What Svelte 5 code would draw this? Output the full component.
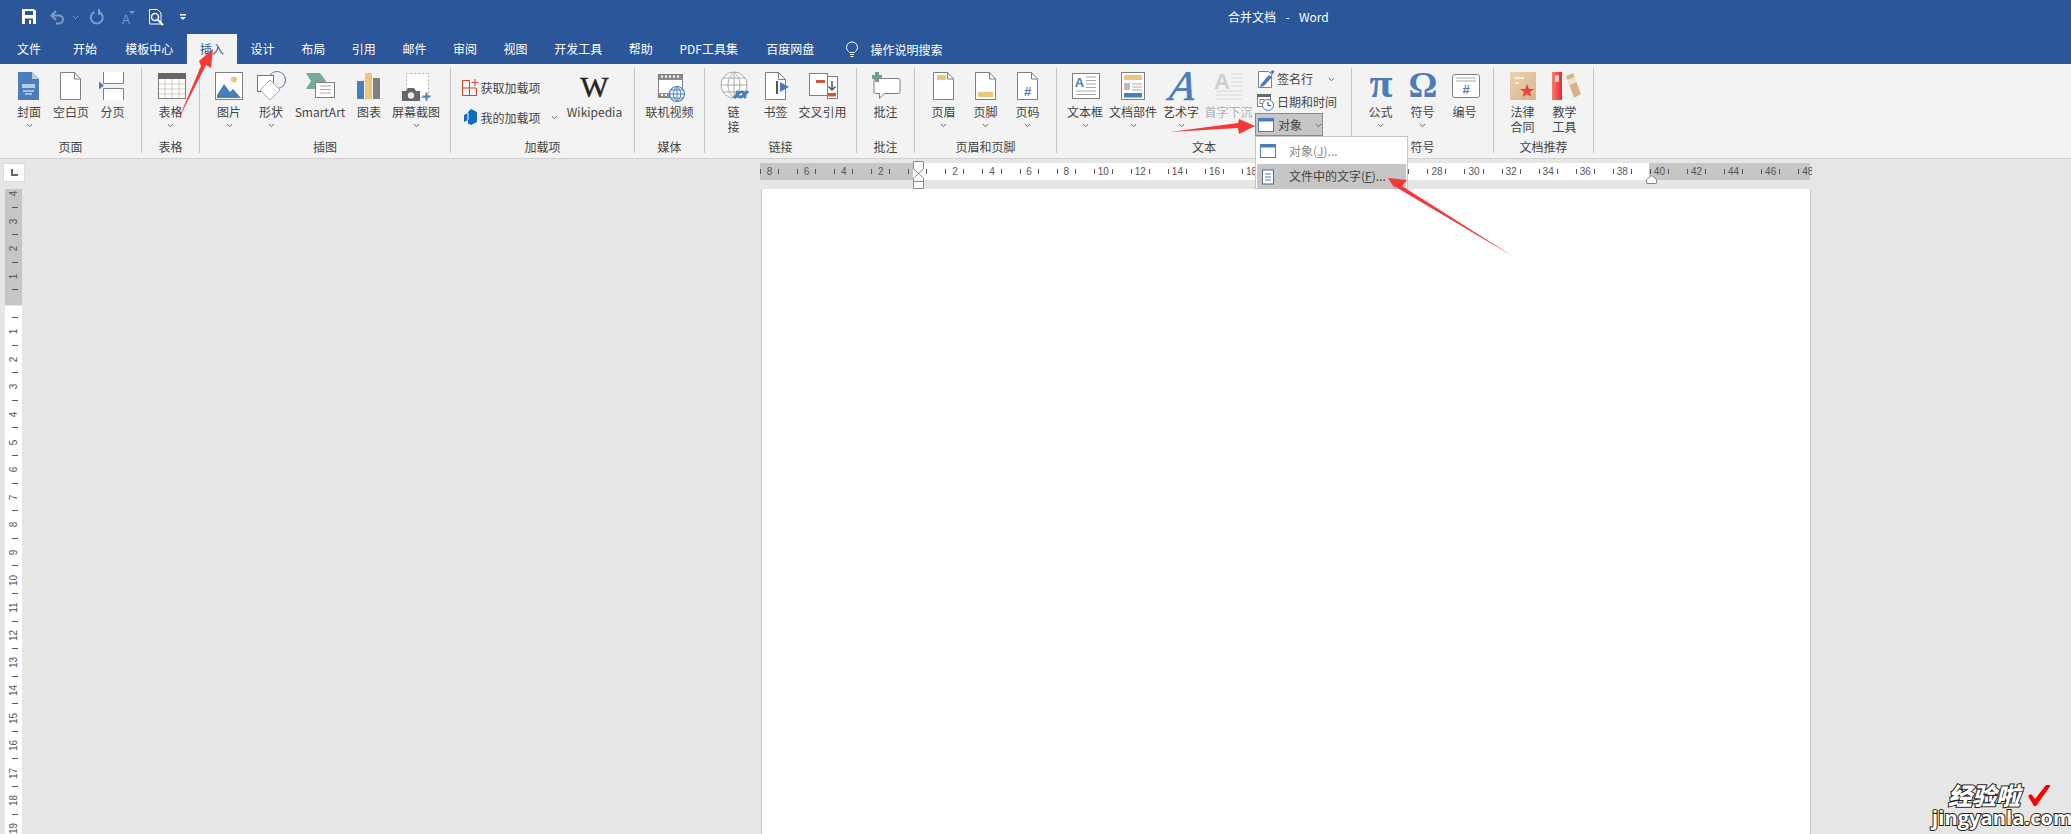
<script>
  const B = '#4a7ebb'
  const T = '#edc67e'
  const G = '#7f7f7f'
  const L = '#a9a9a9'

  const pageShape = `<path d="M5.5 2.5h14l6 6.5v20.5h-20z" fill="#fff" stroke="${G}"/><path d="M19.5 2.5V9h6" fill="none" stroke="${G}"/>`

  // each value is the inside of a 32x32 svg, small ones use 20x20
  const icons = {
    cover: `<path d="M5 2h14l7 7v21H5z" fill="${B}"/><path d="M19 2l7 7h-7z" fill="#b5cde6"/><path d="M9 14h13v4H9z" fill="#cfe0f2" opacity=".8"/><path d="M10 21h11M12 24h7" stroke="#fff" fill="none"/>`,
    blank: pageShape,
    pagebreak: `<path d="M6.5 2V13.5H26.5V2" fill="#fff" stroke="${G}"/><path d="M6.5 30V18.5H26.5V30" fill="#fff" stroke="${G}"/><path d="M2 11.500v8l5-4z" fill="${B}"/>`,
    table: `<rect x="3.500" y="3.500" width="27" height="25" fill="#fff" stroke="${G}"/><path d="M10 9v19M17 9v19M24 9v19M4 14h26M4 19h26M4 24h26" stroke="#cfc9b8" fill="none"/><rect x="3" y="3" width="28" height="6" fill="#666"/>`,
    picture: `<rect x="2.500" y="2.500" width="27" height="27" fill="#fff" stroke="${G}"/><circle cx="21" cy="9.500" r="3" fill="${T}"/><path d="M4 28v-3l7-11 6 8 3-3 8 9z" fill="${B}"/>`,
    shapes: `<circle cx="22" cy="10" r="8.500" fill="none" stroke="${B}"/><rect x="2.500" y="5.500" width="16" height="16" fill="#fff" stroke="${B}"/><path d="M15 10l10 10-10 10-10-10z" fill="#fff" stroke="${L}"/>`,
    smartart: `<path d="M2 3h14l6 8-6 8H2l5-8z" fill="#7aa899"/><rect x="11.500" y="12.500" width="19" height="15" fill="#fff" stroke="${G}"/><path d="M16 16h11M16 19.500h11M16 23h11" stroke="${L}" fill="none"/>`,
    chart: `<rect x="4" y="11" width="7" height="18" fill="${B}"/><rect x="12" y="3" width="7" height="26" fill="${T}"/><rect x="20" y="8" width="7" height="21" fill="${G}"/>`,
    screenshot: `<rect x="6.500" y="3.500" width="22" height="24" fill="#fff" stroke="#aaa" stroke-dasharray="2 2"/><path d="M2 21h4l2-3h6l2 3h4v10H2z" fill="#666"/><circle cx="11" cy="25.500" r="3.200" fill="#eee"/><path d="M26.500 22.500v8M22.500 26.500h8" stroke="${B}" stroke-width="2" fill="none"/>`,
    video: `<rect x="4.500" y="4.500" width="24" height="23" fill="#fff" stroke="${G}"/><path d="M5 5h23v5H5zM5 23h23v4H5z" fill="#8c8c8c"/><path d="M7 6.500h2M11 6.500h2M15 6.500h2M19 6.500h2M23 6.500h2M7 25h2M11 25h2" stroke="#fff" fill="none" stroke-width="2"/><circle cx="23" cy="24" r="7.500" fill="#fff" stroke="${B}" stroke-width="1.200"/><path d="M15.500 24h15M23 16.500v15M17 20h12M17 28h12M23 16.500c-5 4-5 11 0 15M23 16.500c5 4 5 11 0 15" stroke="${B}" fill="none"/>`,
    hyperlink: `<circle cx="16" cy="15" r="13" fill="#fff" stroke="${L}"/><path d="M3 15h26M16 2v26M5 8h22M5 22h22M16 2c-8 7-8 19 0 26M16 2c8 7 8 19 0 26" stroke="${L}" fill="none"/><path d="M16 28l5-5a3.500 3.500 0 0 1 5 5M30 21l-5 5a3.500 3.500 0 0 1-5-5" fill="none" stroke="${B}" stroke-width="3"/>`,
    bookmark: `<path d="M5.500 2.500h13l7 7v20h-20z" fill="#fff" stroke="${G}"/><path d="M18.500 2.500v7h7" fill="none" stroke="${G}"/><path d="M17 11v13" stroke="#555" stroke-width="2"/><path d="M20 12v10l9-5z" fill="${B}"/>`,
    crossref: `<rect x="2.500" y="3.500" width="18" height="22" fill="#fff" stroke="${G}"/><rect x="20.500" y="6.500" width="10" height="22" fill="#fff" stroke="${G}"/><rect x="9" y="10" width="9" height="3" fill="#d0563c"/><rect x="21" y="23" width="8" height="3.500" fill="#d0563c"/><path d="M25 11v9M21.500 16.500l3.500 3.500 3.500-3.500" stroke="#555" stroke-width="1.500" fill="none"/>`,
    comment: `<path d="M6 8.500h22a2 2 0 0 1 2 2v11a2 2 0 0 1-2 2H14l-4.500 5v-5H6a2 2 0 0 1-2-2v-11a2 2 0 0 1 2-2z" fill="#fff" stroke="${G}"/><path d="M7 2v10M2 7h10" stroke="#6fa08c" stroke-width="4" fill="none"/>`,
    header: `${pageShape}<rect x="9" y="5" width="9" height="5" fill="${T}"/>`,
    footer: `${pageShape}<rect x="8" y="22" width="15" height="5" fill="${T}"/>`,
    pagenum: `${pageShape}<text x="15.500" y="26" text-anchor="middle" font-family="Liberation Sans" font-size="13" font-weight="700" fill="${B}">#</text>`,
    textbox: `<rect x="3.500" y="3.500" width="27" height="25" fill="#fff" stroke="${G}"/><text x="10.500" y="17" text-anchor="middle" font-family="Liberation Sans" font-size="13" font-weight="700" fill="${B}">A</text><path d="M17 7h10M17 10.500h10M17 14h10M17 17.500h10M7 21h20M7 24.500h20" stroke="${L}" fill="none"/>`,
    parts: `<rect x="4.500" y="2.500" width="23" height="27" fill="#fff" stroke="${G}"/><rect x="7" y="5" width="18" height="5" fill="${T}"/><rect x="7" y="13" width="6" height="7" fill="#bbb"/><path d="M15 14h10M15 17h10M15 20h10" stroke="${L}" fill="none"/><rect x="7" y="23" width="18" height="4.500" fill="${B}"/>`,
    wordart: `<text x="20" y="30" text-anchor="middle" transform="skewX(-8)" font-family="Liberation Serif" font-style="italic" font-size="42" fill="${B}" stroke="${B}" stroke-width=".6">A</text>`,
    dropcap: `<text x="9" y="19" text-anchor="middle" font-family="Liberation Sans" font-weight="700" font-size="22" fill="#cfcfcf">A</text><path d="M18 4h11M18 8h11M18 12h11M18 16h11M3 21h26M3 25h26M3 29h26" stroke="#d8d8d8" fill="none"/>`,
    formula: `<text x="16" y="27" text-anchor="middle" font-family="Liberation Serif" font-weight="700" font-size="42" fill="${B}">π</text>`,
    omega: `<text x="16" y="27" text-anchor="middle" font-family="Liberation Serif" font-weight="700" font-size="36" fill="${B}">Ω</text>`,
    number: `<rect x="3.500" y="4.500" width="27" height="23" rx="2" fill="#fff" stroke="${G}"/><path d="M7 8h20M7 11h20" stroke="${L}" fill="none"/><text x="17" y="24" text-anchor="middle" font-family="Liberation Sans" font-size="13" font-weight="700" fill="${B}">#</text>`,
    law: `<defs><linearGradient id="lawg" x1="0" y1="0" x2="1" y2="1"><stop offset="0" stop-color="#e9d2b4"/><stop offset="1" stop-color="#d9b48a"/></linearGradient></defs><rect x="3" y="2" width="26" height="28" fill="url(#lawg)"/><path d="M8 8h9M8 13h4" stroke="#fff" stroke-width="1.500" fill="none"/><path d="M20 14l2 5h5l-4 3 1.500 5-4.500-3-4.500 3 1.500-5-4-3h5z" fill="#ee4040"/>`,
    teach: `<defs><linearGradient id="bookg" x1="0" y1="0" x2="1" y2="0"><stop offset="0" stop-color="#ff7a70"/><stop offset="1" stop-color="#e8262c"/></linearGradient></defs><path d="M17 6l7-3 8 21-7 4z" fill="#d9b48a"/><path d="M18.500 10l7-3 2 5-7 3z" fill="#f0e3d0"/><rect x="3" y="2" width="10" height="28" fill="url(#bookg)"/><rect x="6" y="5" width="4" height="7" rx="1" fill="#ffd9d4"/>`,
    addin: `<path d="M8.500 3.500H1.500V18.500H15.500V11H1.500M8.500 3.500V18.500" fill="none" stroke="#d24726"/><path d="M14 2v7M10.500 5.500h7" fill="none" stroke="#d24726"/>`,
    myaddin: `<path d="M10 2l6 3v10l-6 3-3-1.500V13L3 15V8l4-2v-1z" fill="#106ebe"/><path d="M7 6v7" stroke="#fff"/>`,
    sign: `<path d="M3.500 2.500h10l3 3v13h-13z" fill="#fff" stroke="${G}"/><path d="M6 15l8-9 3 2-8 9-4 1z" fill="${B}"/><path d="M15 3l3-2 1.500 1.500-2 3z" fill="${B}"/>`,
    date: `<rect x="2.500" y="2.500" width="13" height="12" fill="#fff" stroke="${G}"/><rect x="2" y="2" width="14" height="3" fill="#666"/><rect x="5" y="7.500" width="4" height="4" fill="none" stroke="#d2701e"/><circle cx="13" cy="13" r="5.500" fill="#fff" stroke="${B}"/><path d="M13 10v3.500h3" stroke="#444" fill="none"/>`,
    object: `<rect x="2.500" y="3.500" width="15" height="13" fill="#fff" stroke="${B}"/><rect x="2" y="3" width="16" height="3.500" fill="${B}"/>`,
    textfile: `<rect x="4.500" y="3" width="11" height="14" fill="#fff" stroke="#5a6a80"/><path d="M7 7h6M7 10h6M7 13h6" stroke="${B}" fill="none"/>`
  }

  const groups = [
    { label: '页面', width: 142, items: [
      { icon: 'cover', text: '封面', w: 42, chev: true },
      { icon: 'blank', text: '空白页', w: 42 },
      { icon: 'pagebreak', text: '分页', w: 41 }
    ] },
    { label: '表格', width: 58, items: [{ icon: 'table', text: '表格', w: 50, chev: true }] },
    { label: '插图', width: 251, items: [
      { icon: 'picture', text: '图片', w: 42, chev: true },
      { icon: 'shapes', text: '形状', w: 42, chev: true },
      { icon: 'smartart', text: 'SmartArt', w: 56 },
      { icon: 'chart', text: '图表', w: 42 },
      { icon: 'screenshot', text: '屏幕截图', w: 52, chev: true }
    ] },
    { label: '加载项', width: 184, items: [
      { kind: 'addins' },
      { kind: 'wiki', text: 'Wikipedia', w: 60 }
    ] },
    { label: '媒体', width: 70, items: [{ icon: 'video', text: '联机视频', w: 60 }] },
    { label: '链接', width: 152, items: [
      { icon: 'hyperlink', text: '链\n接', w: 42 },
      { icon: 'bookmark', text: '书签', w: 42 },
      { icon: 'crossref', text: '交叉引用', w: 52 }
    ] },
    { label: '批注', width: 58, items: [{ icon: 'comment', text: '批注', w: 42 }] },
    { label: '页眉和页脚', width: 142, items: [
      { icon: 'header', text: '页眉', w: 42, chev: true },
      { icon: 'footer', text: '页脚', w: 42, chev: true },
      { icon: 'pagenum', text: '页码', w: 42, chev: true }
    ] },
    { label: '文本', width: 295, items: [
      { icon: 'textbox', text: '文本框', w: 48, chev: true },
      { icon: 'parts', text: '文档部件', w: 48, chev: true },
      { icon: 'wordart', text: '艺术字', w: 48, chev: true },
      { icon: 'dropcap', text: '首字下沉', w: 47, muted: true },
      { kind: 'textcol' }
    ] },
    { label: '符号', width: 142, items: [
      { icon: 'formula', text: '公式', w: 42, chev: true },
      { icon: 'omega', text: '符号', w: 42, chev: true },
      { icon: 'number', text: '编号', w: 42 }
    ] },
    { label: '文档推荐', width: 100, items: [
      { icon: 'law', text: '法律\n合同', w: 42 },
      { icon: 'teach', text: '教学\n工具', w: 42 }
    ] }
  ]

  const tabs = ['文件', '开始', '模板中心', '插入', '设计', '布局', '引用', '邮件', '审阅', '视图', '开发工具', '帮助', 'PDF工具集', '百度网盘']

  // ruler numbers, 0 is left blank under the indent marker
  const hNums = Array.from({ length: 29 }, (_, i) => Math.abs(i * 2 - 8))
  const vNums = Array.from({ length: 25 }, (_, i) => Math.abs(i - 4))
</script>

{#snippet chevron()}
  <svg class="chev" width="7" height="5" viewBox="0 0 7 5"><path d="M.8 1l2.700 2.700L6.200 1" fill="none" stroke="#666"/></svg>
{/snippet}

{#snippet small(name)}
  <svg width="20" height="20" viewBox="0 0 20 20">{@html icons[name]}</svg>
{/snippet}

<div class="word">
  <header class="titlebar">
    <svg class="qat" width="200" height="34" viewBox="0 0 200 34">
      <path d="M22 9h12l2 2v13H22z" fill="#fff"/>
      <path d="M25 11h8v4h-8zM25 18.500h8V24h-8z" fill="#2b579a"/>
      <path d="M29 20h2v4h-2z" fill="#fff"/>
      <path d="M56 11l-4.500 4.500L56 20M52 15.500h7a4 4 0 0 1 0 8h-3" fill="none" stroke="#7f9bc7" stroke-width="2"/>
      <path d="M73 16l2.500 2.500L78 16" fill="none" stroke="#7f9bc7"/>
      <path d="M99 12a6 6 0 1 1-4.500 0M99 9v5h-1" fill="none" stroke="#7f9bc7" stroke-width="2"/>
      <text x="126" y="24" text-anchor="middle" font-family="Liberation Sans" font-size="12" fill="#7f9bc7">A</text>
      <path d="M129 11h6l-3 3z" fill="#7f9bc7"/>
      <path d="M149.500 9.500h8l3.500 3.500v11h-11.500z" fill="#2b579a" stroke="#fff"/>
      <circle cx="155" cy="17" r="3.500" fill="#2b579a" stroke="#fff" stroke-width="1.500"/>
      <path d="M158 20l5 5" stroke="#fff" stroke-width="2"/>
      <path d="M180 14h6v1.500h-6zM180 17h6l-3 3z" fill="#fff"/>
    </svg>
    <div class="title">合并文档&nbsp; -&nbsp; Word</div>
  </header>

  <nav class="tabs">
    {#each tabs as tab, i}
      <div class="tab" class:active={tab === '插入'} class:first={i === 0} class:second={i === 1} class:pdf={i === 12}>{tab}</div>
    {/each}
    <svg class="bulb" width="14" height="17" viewBox="0 0 14 17">
      <path d="M4.500 11.500C3 10 1.500 8.800 1.500 6.500a5.500 5.500 0 0 1 11 0c0 2.300-1.500 3.500-3 5zM5 13.500h4M5.500 15.500h3" fill="none" stroke="#fff"/>
    </svg>
    <div class="search">操作说明搜索</div>
  </nav>

  <section class="ribbon">
    {#each groups as group}
      <div class="group" style="width: {group.width}px">
        <div class="items">
          {#each group.items as item}
            {#if item.kind === 'addins'}
              <div class="addins">
                <div class="addin-row">
                  <span class="addin-icon">{@render small('addin')}</span>
                  <span>获取加载项</span>
                </div>
                <div class="addin-row">
                  <span class="addin-icon">{@render small('myaddin')}</span>
                  <span>我的加载项</span>
                  {@render chevron()}
                </div>
              </div>
            {:else if item.kind === 'wiki'}
              <div class="item" style="width: {item.w}px">
                <div class="wiki-w">W</div>
                <div class="label">{item.text}</div>
              </div>
            {:else if item.kind === 'textcol'}
              <div class="textcol">
                <div class="text-row">
                  {@render small('sign')}
                  <span>签名行</span>
                  {@render chevron()}
                </div>
                <div class="text-row">
                  {@render small('date')}
                  <span>日期和时间</span>
                </div>
                <div class="text-row pressed">
                  {@render small('object')}
                  <span>对象</span>
                  {@render chevron()}
                  <div class="menu">
                    <div class="menu-item disabled">
                      <span class="menu-icon">{@render small('object')}</span>
                      <span class="menu-text">对象(<u>J</u>)...</span>
                    </div>
                    <div class="menu-item hover">
                      <span class="menu-icon">{@render small('textfile')}</span>
                      <span class="menu-text">文件中的文字(<u>F</u>)...</span>
                    </div>
                  </div>
                </div>
              </div>
            {:else}
              <div class="item" style="width: {item.w}px">
                <svg class="big" width="32" height="32" viewBox="0 0 32 32">{@html icons[item.icon]}</svg>
                <div class="label" class:muted={item.muted}>{item.text}</div>
                {#if item.chev}{@render chevron()}{/if}
              </div>
            {/if}
          {/each}
        </div>
        <div class="group-label">{group.label}</div>
      </div>
    {/each}
  </section>

  <main class="doc">
    <div class="corner"><div class="tabstop"></div></div>
    <div class="hruler-wrap">
      <div class="hruler">
        <div class="hstrip">
          {#each hNums as n, i}
            <div class="hcell">{i === 4 ? '' : n}</div>
          {/each}
        </div>
        <svg class="indent" width="11" height="28" viewBox="0 0 11 28">
          <path d="M.5.500h10V8l-5 4.500L.5 8zM5.500 12.500l5 4.500v10.500H.5V17zM.5 20.500h10" fill="#fff" stroke="#8a8a8a"/>
        </svg>
        <svg class="rindent" width="11" height="9" viewBox="0 0 11 9">
          <path d="M5.500.5l5 4v4H.5v-4z" fill="#fff" stroke="#8a8a8a"/>
        </svg>
      </div>
    </div>
    <div class="vruler">
      <div class="vstrip">
        {#each vNums as n, i}
          <div class="vcell"><span>{i === 4 ? '' : n}</span></div>
        {/each}
      </div>
    </div>
    <div class="workspace">
      <div class="page"></div>
    </div>
  </main>

  <svg class="arrows" width="2071" height="834" viewBox="0 0 2071 834">
    <path d="M178 120L201 66 199 61 213 49 211 68 206 65z" fill="#f5383a"/>
    <path d="M1170 132L1238 123 1239 119 1255 126 1239 134 1238 128z" fill="#f5383a"/>
    <path d="M1388 178L1407 180 1402 186 1514 257 1394 186 1397 192z" fill="#f5383a"/>
  </svg>

  <div class="watermark">
    <div class="wm-top">
      <span>经验啦</span>
      <svg width="24" height="24" viewBox="0 0 24 24"><path d="M1 13l3-2 4 5L19 2h4v1.500L9 23H7z" fill="#f00"/></svg>
    </div>
    <div class="wm-url">jingyanla.com</div>
  </div>
</div>

<style>
  :global(body) {
    margin: 0;
    overflow: hidden;
  }

  .word {
    position: relative;
    width: 2071px;
    height: 834px;
    overflow: hidden;
    display: flex;
    flex-direction: column;
    background: #e6e6e6;
    color: #444;
    font: 12px "Noto Sans CJK SC", "Liberation Sans", sans-serif;
  }

  .titlebar {
    display: flex;
    height: 34px;
    background: #2b579a;
    color: #fff;
  }

  .qat {
    flex: none;
  }

  .title {
    margin-left: 1028px;
    line-height: 34px;
    word-spacing: 2px;
  }

  .tabs {
    display: flex;
    align-items: center;
    height: 30px;
    background: #2b579a;
    color: #fff;
  }

  .tab {
    height: 30px;
    line-height: 29px;
    padding: 0 13.3px;
  }

  .tab.first {
    padding: 0 17px;
  }

  .tab.second {
    padding: 0 15px;
  }

  .tab.pdf {
    padding-right: 15px;
  }

  .tab.active {
    background: #f3f3f3;
    color: #2b579a;
  }

  .bulb {
    margin-left: 17px;
  }

  .search {
    margin-left: 12px;
  }

  .ribbon {
    position: relative;
    z-index: 2;
    display: flex;
    height: 90px;
    padding-top: 4px;
    background: #f3f3f3;
    border-bottom: 1px solid #d0d0d0;
  }

  .group {
    box-sizing: border-box;
    display: flex;
    flex-direction: column;
    height: 85px;
    border-right: 1px solid #c6c6c6;
  }

  .items {
    flex: 1;
    display: flex;
    justify-content: center;
    min-height: 0;
  }

  .item {
    display: flex;
    flex-direction: column;
    align-items: center;
    padding-top: 2px;
    flex: none;
  }

  .big {
    overflow: visible;
  }

  .label {
    margin-top: 2px;
    line-height: 15px;
    white-space: pre;
    text-align: center;
  }

  .label.muted {
    color: #b1b1b1;
  }

  .chev {
    display: block;
    margin-top: 4px;
    flex: none;
  }

  .group-label {
    line-height: 14px;
    margin-bottom: -1px;
    text-align: center;
  }

  .wiki-w {
    height: 32px;
    font: 400 30px/34px "Liberation Serif", serif;
    -webkit-text-stroke: .4px #222;
    color: #222;
  }

  .addins {
    flex: none;
    width: 104px;
    padding-top: 4px;
  }

  .addin-row {
    display: flex;
    align-items: center;
    height: 30px;
  }

  .addin-icon {
    display: block;
    width: 20px;
    height: 20px;
  }

  .addin-row .chev {
    margin: 1px 0 0 10px;
  }

  .textcol {
    flex: none;
    width: 92px;
    margin-left: 3px;
    margin-top: -1px;
  }

  .text-row {
    position: relative;
    display: flex;
    align-items: center;
    gap: 2px;
    height: 23px;
  }

  .text-row .chev {
    margin: 1px 0 0 13px;
  }

  .pressed {
    box-sizing: border-box;
    width: 68px;
    background: #c6c6c6;
    border: 1px solid #8a8a8a;
    margin-left: 0;
  }

  .pressed .chev {
    margin-left: 11px;
  }

  .menu {
    position: absolute;
    left: -1px;
    top: 22px;
    box-sizing: border-box;
    width: 153px;
    height: 53px;
    padding: 1px;
    background: #fff;
    border: 1px solid #c6c6c6;
  }

  .menu-item {
    display: flex;
    align-items: center;
    height: 25px;
  }

  .menu-text {
    margin-top: -2px;
  }

  .menu-item.disabled {
    height: 26px;
    color: #8a8a8a;
  }

  .menu-item.hover {
    background: #c6c6c6;
  }

  .menu-icon {
    display: block;
    width: 20px;
    height: 20px;
    margin: 0 11px 0 1px;
  }

  .doc {
    flex: 1;
    min-height: 0;
    display: grid;
    grid-template-columns: 29px 1fr;
    grid-template-rows: 30px 1fr;
  }

  .corner {
    box-sizing: border-box;
    width: 22px;
    height: 19px;
    margin: 4px 0 0 3px;
    display: flex;
    align-items: center;
    justify-content: center;
    background: #fff;
    border: 1px solid #dcdcdc;
  }

  .tabstop {
    width: 5px;
    height: 5px;
    border-left: 2px solid #666;
    border-bottom: 2px solid #666;
  }

  .hruler-wrap {
    padding: 4px 0 0 731px;
  }

  .hruler {
    position: relative;
    width: 1050px;
    height: 17px;
    background: linear-gradient(to right, #c6c6c6 153px, #fff 153px, #fff 889px, #c6c6c6 889px);
  }

  .hstrip {
    display: flex;
    margin-left: -9px;
    width: 1061px;
    height: 17px;
    overflow: hidden;
  }

  .hcell {
    position: relative;
    flex: 0 0 37.08px;
    line-height: 17px;
    text-align: center;
    font: 10px/17px "Liberation Sans", sans-serif;
    color: #555;
  }

  .hcell::before,
  .hcell::after {
    content: '';
    position: absolute;
    top: 6px;
    width: 1px;
    height: 5px;
    background: #555;
  }

  .hcell::before {
    left: 9px;
  }

  .hcell::after {
    right: 9px;
  }

  .indent {
    position: absolute;
    left: 153px;
    top: -2px;
  }

  .rindent {
    position: absolute;
    left: 886px;
    top: 12px;
  }

  .vruler {
    width: 17px;
    margin-left: 5px;
    overflow: hidden;
    background: linear-gradient(to bottom, #c6c6c6 116px, #e6e6e6 116px, #e6e6e6 117px, #fff 117px);
  }

  .vstrip {
    margin-top: -9px;
  }

  .vcell {
    position: relative;
    height: 27.6px;
    display: flex;
    align-items: center;
    justify-content: center;
    font: 10px "Liberation Sans", sans-serif;
    color: #555;
  }

  .vcell span {
    transform: rotate(-90deg);
  }

  .vcell::after {
    content: '';
    position: absolute;
    left: 7px;
    bottom: 0;
    width: 6px;
    height: 1px;
    background: #555;
  }

  .workspace {
    min-height: 0;
    padding-left: 732px;
  }

  .page {
    box-sizing: border-box;
    width: 1050px;
    height: 100%;
    background: #fff;
    border-left: 1px solid #c6c6c6;
    border-right: 1px solid #c6c6c6;
  }

  .arrows {
    position: absolute;
    left: 0;
    top: 0;
    z-index: 5;
    pointer-events: none;
  }

  .watermark {
    position: absolute;
    left: 1932px;
    top: 781px;
    width: 125px;
    color: #fff;
    font-weight: 900;
    -webkit-text-stroke: 2px #222;
    paint-order: stroke fill;
  }

  .wm-top {
    display: flex;
    align-items: center;
    gap: 7px;
    padding-left: 16px;
    height: 27px;
    font-size: 24px;
    line-height: 27px;
    font-style: italic;
  }

  .wm-url {
    font: 700 20px/20px "Open Sans", "Liberation Sans", sans-serif;
    letter-spacing: .1px;
  }
</style>
